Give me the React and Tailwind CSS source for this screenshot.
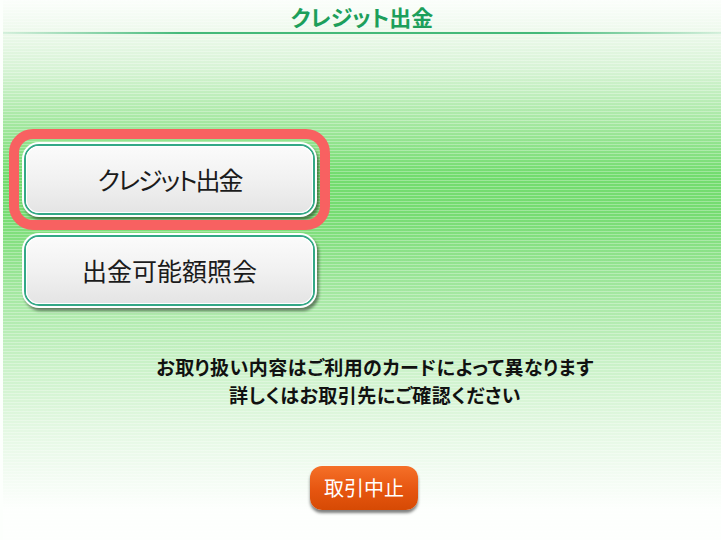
import React from "react";

const MenuButton = ({ label, highlighted, tight }) => {
  return (
    <div className="relative">
      {highlighted && (
        <div className="absolute -inset-[13px] rounded-[24px] border-[10px] border-[#f86161] pointer-events-none" />
      )}
      <button
        type="button"
        className="w-[295px] h-[75px] rounded-[17px] bg-white p-[2px] shadow-[2px_3px_3px_rgba(0,0,0,0.45)] cursor-pointer"
      >
        <div className="h-full rounded-[15px] border-2 border-[#33a886]">
          <div
            className={`h-full rounded-[13px] flex items-center justify-center bg-[linear-gradient(to_bottom,#fbfbfb,#f1f1f1_50%,#e4e4e4)] shadow-[inset_0_0_0_1px_#ffffff] text-[25px] text-[#1b1b1b] [font-feature-settings:'palt'] ${tight ? "tracking-[-2px]" : ""}`}
          >
            {label}
          </div>
        </div>
      </button>
    </div>
  );
};

const App = () => {
  return (
    <div className="w-[721px] h-[540px] bg-[#fcfffc] pl-[3px] overflow-hidden font-['Noto_Sans_CJK_JP','Noto_Sans',sans-serif]">
      <div className="h-full flex flex-col [background-image:repeating-linear-gradient(to_bottom,rgba(255,255,255,0.3)_0px,rgba(255,255,255,0.3)_1px,transparent_1px,transparent_3px),linear-gradient(to_bottom,#fbfefb_0px,#eef9ed_30px,#d6f3d4_70px,#a2e79e_125px,#72dc6e_175px,#76dc72_215px,#a2e79f_290px,#c8f1c6_360px,#e4f8e3_430px,#f4fcf4_480px,#fdfffd_510px)]">
        <header className="h-[32px] flex items-center justify-center text-[22px] font-bold text-[#1c9f5b] [font-feature-settings:'palt']">
          クレジット出金
        </header>
        <div className="h-[2px] bg-[linear-gradient(to_right,rgba(68,185,122,0.15),#44b97a_25%,#44b97a_75%,rgba(68,185,122,0.15))]" />

        <div className="mt-[108px] ml-[19px] flex flex-col items-start gap-[16px]">
          <MenuButton label="クレジット出金" highlighted tight />
          <MenuButton label="出金可能額照会" />
        </div>

        <div className="mt-[45px] pl-[26px] text-center text-[19px] leading-[27.5px] tracking-[0.5px] font-bold text-[#111] [font-feature-settings:'palt']">
          <p>お取り扱い内容はご利用のカードによって異なります</p>
          <p>詳しくはお取引先にご確認ください</p>
        </div>

        <div className="mt-[58px] flex justify-center pl-[4px]">
          <button
            type="button"
            className="w-[108px] h-[44px] rounded-[12px] bg-[linear-gradient(to_bottom,#f57028,#e65510_55%,#d64a04)] text-white text-[20px] shadow-[0_3px_3px_rgba(0,0,0,0.5)] cursor-pointer"
          >
            取引中止
          </button>
        </div>
      </div>
    </div>
  );
};

export default App;
